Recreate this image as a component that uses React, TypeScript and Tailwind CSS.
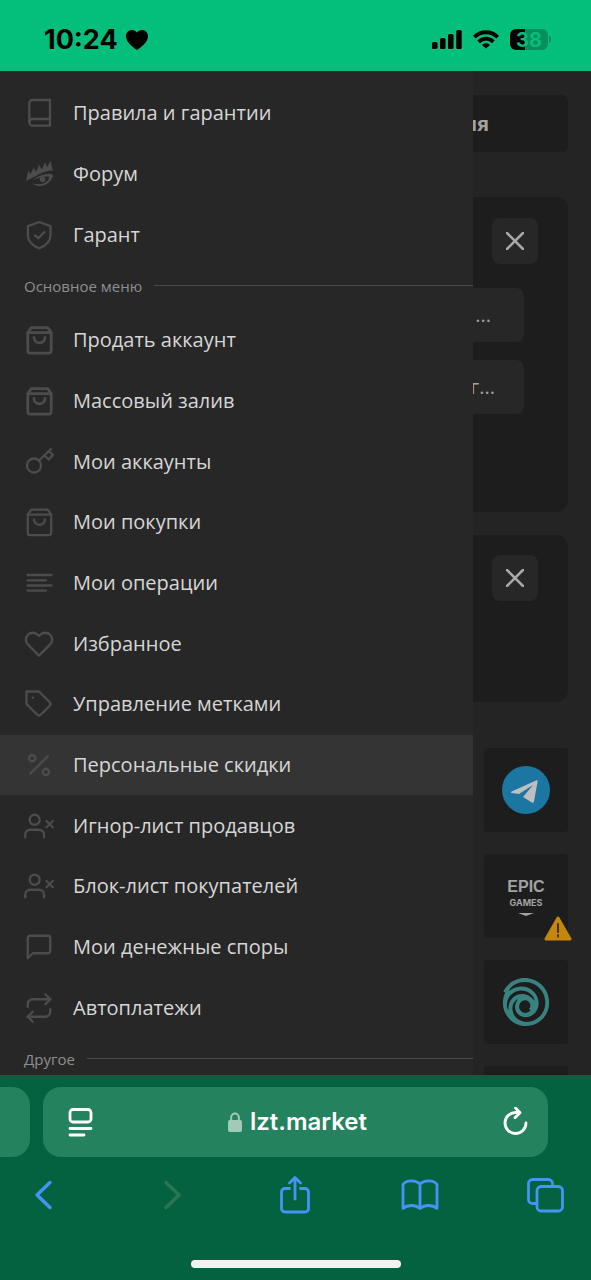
import type { ReactNode } from "react";
import {
  FiHeart,
  FiMessageSquare,
  FiPercent,
  FiRepeat,
  FiTag,
  FiUserX,
} from "react-icons/fi";
import { SiUbisoft } from "react-icons/si";

interface IconProps {
  children: ReactNode;
  className?: string;
}

function MenuIcon({ children, className = "stroke-[2.3]" }: IconProps) {
  return (
    <svg
      viewBox="0 0 30 30"
      fill="none"
      stroke="currentColor"
      strokeLinecap="round"
      strokeLinejoin="round"
      className={`size-[30px] ${className}`}
    >
      {children}
    </svg>
  );
}

function BagIcon({ className }: { className?: string }) {
  return (
    <MenuIcon className={className}>
      <path d="M3.8 7.6 7.3 2.6h16.4l3.5 5v18.2a2.4 2.4 0 0 1-2.4 2.4H6.2a2.4 2.4 0 0 1-2.4-2.4Z" />
      <path d="M3.8 7.6h23.4M10 12.4a5.5 5.5 0 0 0 11 0" />
    </MenuIcon>
  );
}

const feather = "size-[30px] overflow-visible stroke-[1.9]";

interface MenuItem {
  label: string;
  icon: ReactNode;
  active?: boolean;
}

const topItems: MenuItem[] = [
  {
    label: "Правила и гарантии",
    icon: (
      <MenuIcon>
        <path d="M26 2H8.5a3.2 3.2 0 0 0-3.2 3.2v19A3.4 3.4 0 0 0 8.7 27.6H26Z" />
        <path d="M5.3 24a3.4 3.4 0 0 1 3.4-3H26" />
      </MenuIcon>
    ),
  },
  {
    label: "Форум",
    icon: (
      <MenuIcon className="stroke-none">
        <g fill="currentColor">
          <path d="M2 22.5 4.2 12l2.6 3L9.6 8.6l2.6 4 3-6.8 2.6 4.6 3.2-7 2.2 4.6L26.6 2l2.2 9.4C20 11.5 15 15.5 9.5 18.2 6.5 19.6 4 20.6 2 22.5Z" />
          <path d="M8.5 21.4c6-5 13-7.2 18.6-6.5 1.9.4 2.3 1.6 1.5 3.4C26 24 20.5 27.2 15 27c-2.8-.1-4.9-1.1-6.3-2.5 5 1.5 10.5 1.2 14.5-2.5 1.7-1.7 2.3-3.2 1.7-4.5-4.4-.6-10.5 1.1-16.4 3.9Z" />
          <circle cx="18.5" cy="20.2" r="2.8" />
        </g>
      </MenuIcon>
    ),
  },
  {
    label: "Гарант",
    icon: (
      <MenuIcon>
        <path d="m15.2 2 11.3 4.2V15c0 6.600-5 10.900-11.300 13.400C9 25.900 3.900 21.600 3.900 15V6.200Z" />
        <path d="m11 15.400 3.200 2.800 6.200-6.200" />
      </MenuIcon>
    ),
  },
];

const mainItems: MenuItem[] = [
  { label: "Продать аккаунт", icon: <BagIcon className="stroke-[2.8]" /> },
  { label: "Массовый залив", icon: <BagIcon className="stroke-[2.8]" /> },
  {
    label: "Мои аккаунты",
    icon: (
      <MenuIcon>
        <circle cx="10" cy="18.5" r="7" />
        <path d="M15 13.500 27 2M20.500 8.500l4.200 4 4.300-4.600-4.200-3.800" />
      </MenuIcon>
    ),
  },
  { label: "Мои покупки", icon: <BagIcon /> },
  {
    label: "Мои операции",
    icon: (
      <MenuIcon>
        <path d="M3.500 7h24M3.500 12.300H22M3.500 17.500h24M3.500 22.700H22" />
      </MenuIcon>
    ),
  },
  { label: "Избранное", icon: <FiHeart className={feather} /> },
  { label: "Управление метками", icon: <FiTag className={feather} /> },
  {
    label: "Персональные скидки",
    icon: <FiPercent className={feather} />,
    active: true,
  },
  { label: "Игнор-лист продавцов", icon: <FiUserX className={feather} /> },
  { label: "Блок-лист покупателей", icon: <FiUserX className={feather} /> },
  { label: "Мои денежные споры", icon: <FiMessageSquare className={feather} /> },
  { label: "Автоплатежи", icon: <FiRepeat className={feather} /> },
];

function MenuRow({ item }: { item: MenuItem }) {
  return (
    <li className={`flex min-h-[60px] flex-1 ${item.active ? "bg-[#343434]" : ""}`}>
      <a href="#" className="flex flex-1 items-center gap-[19px] pl-6">
        <span className="text-[#4c4c4c]">{item.icon}</span>
        <span className="text-xl text-[#d6d6d6]">{item.label}</span>
      </a>
    </li>
  );
}

function SectionTitle({ children }: { children: ReactNode }) {
  return (
    <li className="flex h-[37px] items-start gap-3 pt-[11px] pl-6">
      <h2 className="text-[15px] leading-5 text-[#8e8e8e]">{children}</h2>
      <span className="mt-[9px] h-px flex-1 bg-[#4a4a4a]" />
    </li>
  );
}

function StatusBar() {
  return (
    <header className="flex h-[71px] items-center justify-between bg-[#04bf7b] pt-2 pr-10 pl-11 font-['Inter',sans-serif] text-black">
      <div className="flex items-center gap-2">
        <span className="text-[27px] leading-8 font-bold">10:24</span>
        <svg viewBox="0 0 22 20" className="h-5 w-[22px]" fill="currentColor">
          <path d="M11 20C7.500 17.500 0 12.500 0 6.300 0 2.700 2.600 0 6 0c2.100 0 3.900 1 5 2.700C12.100 1 13.900 0 16 0c3.400 0 6 2.700 6 6.300C22 12.500 14.500 17.500 11 20Z" />
        </svg>
      </div>
      <div className="flex items-center gap-[11px]">
        <svg viewBox="0 0 30 19" className="h-[19px] w-[30px]" fill="currentColor">
          <rect y="12" width="5.5" height="7" rx="1.5" />
          <rect x="8" y="8" width="5.5" height="11" rx="1.5" />
          <rect x="16" y="4" width="5.5" height="15" rx="1.5" />
          <rect x="24.2" width="5.5" height="19" rx="1.5" />
        </svg>
        <svg viewBox="0 0 26 19" className="h-[19px] w-[26px]" fill="none" stroke="currentColor" strokeWidth="3.8">
          <path d="M1.300 7.100C8 .6 18 .6 24.700 7.100" />
          <path d="M5.700 11.800c4.200-4.200 10.400-4.200 14.600 0" />
          <path d="M13 18.600 9 14.900c2.200-2.100 5.800-2.100 8 0Z" fill="currentColor" stroke="none" />
        </svg>
        <div className="flex items-center gap-px">
          <div className="flex h-[21px] w-[38px] items-center justify-center rounded-md bg-linear-to-r from-black from-40% to-[#078f5e] to-40%">
            <span className="text-xl leading-5 font-bold text-[#09bc7a]">38</span>
          </div>
          <span className="h-[7px] w-[2px] rounded-r bg-[#078f5e]" />
        </div>
      </div>
    </header>
  );
}

function CloseButton() {
  return (
    <button
      aria-label="Закрыть"
      className="mr-[30px] flex size-[46px] items-center justify-center rounded-lg bg-[#272727] text-[#a9a9a9]"
    >
      <svg viewBox="0 0 18 18" className="size-[18px]" stroke="currentColor" strokeWidth="2.5" strokeLinecap="round">
        <path d="m1 1 16 16M17 1 1 17" />
      </svg>
    </button>
  );
}

function Tile({ children, label }: { children?: ReactNode; label: string }) {
  return (
    <a
      href="#"
      aria-label={label}
      className="relative flex size-[84px] shrink-0 flex-col items-center justify-center rounded-sm bg-[#1d1d1d]"
    >
      {children}
    </a>
  );
}

function MarketPage() {
  return (
    <main className="col-start-1 row-start-1 flex h-0 min-h-full flex-col overflow-hidden bg-[#242424] px-[23px] pt-6 text-[#a2a2a2]">
      <button className="h-[57px] shrink-0 rounded-md bg-[#1d1d1d] pr-[79px] text-right text-xl font-bold">
        ия
      </button>

      <section className="mt-[45px] flex h-[315px] shrink-0 flex-col items-end rounded-xl bg-[#1d1d1d] pt-[21px]">
        <CloseButton />
        <button className="mt-6 mr-11 h-[54px] w-3/5 rounded-lg bg-[#272727] pr-[33px] text-right text-xl">
          ...
        </button>
        <button className="mt-[18px] mr-11 h-[54px] w-3/5 rounded-lg bg-[#272727] pr-[29px] text-right text-xl">
          г...
        </button>
      </section>

      <section className="mt-[23px] flex h-[167px] shrink-0 flex-col items-end rounded-xl bg-[#1d1d1d] pt-5">
        <CloseButton />
      </section>

      <div className="mt-[46px] flex flex-col items-end gap-[22px]">
        <Tile label="Telegram">
          <svg viewBox="0 0 48 48" className="size-12">
            <circle cx="24" cy="24" r="24" fill="#1b76a2" />
            <path
              fill="#bfbfbf"
              d="M9.600 25.400 34 14.400c1.100-.5 1.800.1 1.600 1.200L32 35.400c-.2 1.300-1.100 1.600-2.100 1L21 31l10-12-14 9-7.300-1.100c-1-.3-1-1-.1-1.500Z"
            />
          </svg>
        </Tile>
        <Tile label="Epic Games">
          <span className="font-['Liberation_Sans_Narrow','Liberation_Sans',sans-serif] text-base leading-5 font-bold">
            EPIC
          </span>
          <span className="font-['Inter',sans-serif] text-[9px] leading-3 font-bold">GAMES</span>
          <svg viewBox="0 0 16 3" className="mt-1 h-[3px] w-4" fill="currentColor">
            <path d="M0 0h16L8 3Z" />
          </svg>
          <svg viewBox="0 0 28 25" className="absolute -right-1 -bottom-[3px] h-[25px] w-7">
            <path
              d="M14 2 26 23H2Z"
              fill="#c5860c"
              stroke="#c5860c"
              strokeWidth="3"
              strokeLinejoin="round"
            />
            <path d="M14 8v8M14 19v1.500" stroke="#40300c" strokeWidth="2" strokeLinecap="round" />
          </svg>
        </Tile>
        <Tile label="Ubisoft">
          <SiUbisoft className="size-12 text-[#38837f]" />
        </Tile>
        <Tile label="Ещё" />
      </div>
    </main>
  );
}

function Drawer() {
  return (
    <nav className="z-10 col-start-1 row-start-1 flex w-4/5 flex-col bg-[#272727]">
      <ul className="flex flex-1 flex-col pt-3">
        {topItems.map((item) => (
          <MenuRow key={item.label} item={item} />
        ))}
        <SectionTitle>Основное меню</SectionTitle>
        <li className="h-2" />
        {mainItems.map((item) => (
          <MenuRow key={item.label} item={item} />
        ))}
        <SectionTitle>Другое</SectionTitle>
      </ul>
    </nav>
  );
}

interface ToolButtonProps {
  label: string;
  children: ReactNode;
  disabled?: boolean;
}

function ToolButton({ label, children, disabled }: ToolButtonProps) {
  return (
    <button
      aria-label={label}
      disabled={disabled}
      className="size-[38px] text-[#4593f5] disabled:text-[#2b7553]"
    >
      <svg
        viewBox="0 0 38 38"
        className="size-[38px]"
        fill="none"
        stroke="currentColor"
        strokeWidth="2.8"
        strokeLinecap="round"
        strokeLinejoin="round"
      >
        {children}
      </svg>
    </button>
  );
}

function BrowserBar() {
  return (
    <footer className="flex flex-col bg-[#056241] pt-3 pb-3 font-['Inter',sans-serif]">
      <div className="flex h-[70px] gap-[13px] pr-[43px]">
        <div className="w-[30px] rounded-r-[18px] bg-[#24825f]" />
        <div className="flex flex-1 items-center justify-between rounded-[18px] bg-[#24825f] pr-5 pl-6 text-white">
          <button aria-label="Меню страницы">
            <svg viewBox="0 0 26 30" className="h-[30px] w-[26px]" fill="none" stroke="currentColor" strokeWidth="2.8" strokeLinecap="round">
              <rect x="3" y="2.5" width="21" height="12.5" rx="3" />
              <path d="M3 21.500h21M3 28h14" />
            </svg>
          </button>
          <button className="flex items-center gap-2">
            <svg viewBox="0 0 14 20" className="h-5 w-[14px] text-[#a1cab9]">
              <path d="M3.200 9V5.300a3.800 3.800 0 0 1 7.600 0V9" fill="none" stroke="currentColor" strokeWidth="2" />
              <rect y="8" width="14" height="12" rx="2" fill="currentColor" />
            </svg>
            <span className="text-2xl font-semibold">lzt.market</span>
          </button>
          <button aria-label="Обновить">
            <svg viewBox="0 0 26 30" className="h-[30px] w-[26px]" fill="none" stroke="currentColor" strokeWidth="2.8" strokeLinecap="round" strokeLinejoin="round">
              <path d="M24 16A10.500 10.500 0 1 1 13.500 5.500h4" />
              <path d="m13.500 1 4.500 4.800-5 5" />
            </svg>
          </button>
        </div>
      </div>

      <div className="mt-[19px] flex justify-between pr-[26px] pl-6">
        <ToolButton label="Назад">
          <path d="M26 6.500 13 19l13 12.500" strokeWidth="3.4" />
        </ToolButton>
        <ToolButton label="Вперёд" disabled>
          <path d="m16 6.500 13 12.500-13 12.500" strokeWidth="3.4" />
        </ToolButton>
        <ToolButton label="Поделиться">
          <path d="M13.500 12.500H9A3.500 3.500 0 0 0 5.500 16v16.500A3.500 3.500 0 0 0 9 36h20a3.500 3.500 0 0 0 3.500-3.500V16a3.500 3.500 0 0 0-3.500-3.500h-4.500" />
          <path d="M19 23V2M13.500 7 19 1.500 24.500 7" />
        </ToolButton>
        <ToolButton label="Закладки">
          <path d="M19 8C14.500 3.500 5 4 2 8.500V32.500c4-4 12.500-4 17 0 4.500-4 13-4 17 0V8.500C33 4 23.500 3.500 19 8v24" />
        </ToolButton>
        <ToolButton label="Вкладки">
          <rect x="10" y="10.5" width="25.500" height="24.500" rx="4" />
          <path d="M10 27.500H5.500a4 4 0 0 1-4-4V7.500a4 4 0 0 1 4-4h16a4 4 0 0 1 4 4v3" />
        </ToolButton>
      </div>

      <div className="mt-[46px] h-2 w-[210px] self-center rounded-full bg-[#f2f2ee]" />
    </footer>
  );
}

export default function App() {
  return (
    <div className="flex min-h-screen flex-col bg-[#242424] font-['Open_Sans',sans-serif]">
      <StatusBar />
      <div className="grid flex-1 grid-cols-1">
        <MarketPage />
        <Drawer />
      </div>
      <BrowserBar />
    </div>
  );
}
